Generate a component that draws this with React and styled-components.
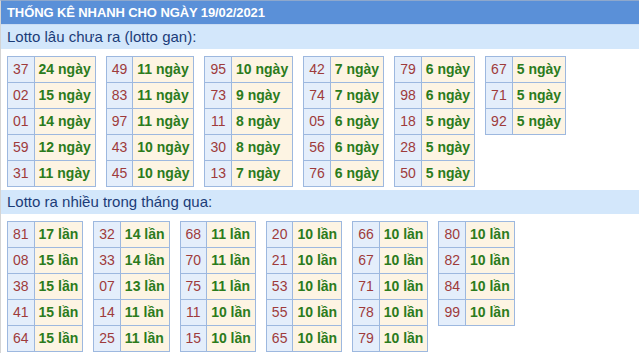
import React from 'react'
import styled, { createGlobalStyle } from 'styled-components'

const gan = [
  [['37', 24], ['02', 15], ['01', 14], ['59', 12], ['31', 11]],
  [['49', 11], ['83', 11], ['97', 11], ['43', 10], ['45', 10]],
  [['95', 10], ['73', 9], ['11', 8], ['30', 8], ['13', 7]],
  [['42', 7], ['74', 7], ['05', 6], ['56', 6], ['76', 6]],
  [['79', 6], ['98', 6], ['18', 5], ['28', 5], ['50', 5]],
  [['67', 5], ['71', 5], ['92', 5]],
]

const nhieu = [
  [['81', 17], ['08', 15], ['38', 15], ['41', 15], ['64', 15]],
  [['32', 14], ['33', 14], ['07', 13], ['14', 11], ['25', 11]],
  [['68', 11], ['70', 11], ['75', 11], ['11', 10], ['15', 10]],
  [['20', 10], ['21', 10], ['53', 10], ['55', 10], ['65', 10]],
  [['66', 10], ['67', 10], ['71', 10], ['78', 10], ['79', 10]],
  [['80', 10], ['82', 10], ['84', 10], ['99', 10]],
]

export default function App() {
  return (
    <>
      <GlobalStyle />
      <Page>
        <TopBar>THỐNG KÊ NHANH CHO NGÀY 19/02/2021</TopBar>
        <Section title="Lotto lâu chưa ra (lotto gan):" groups={gan} unit="ngày" />
        <Section title="Lotto ra nhiều trong tháng qua:" groups={nhieu} unit="lần" />
      </Page>
    </>
  )
}

function Section({ title, groups, unit }) {
  return (
    <SectionWrap>
      <SubBar>{title}</SubBar>
      <Tables>
        {groups.map((rows, i) => (
          <Table key={i}>
            <tbody>
              {rows.map(([num, val]) => (
                <tr key={num}>
                  <NumCell>{num}</NumCell>
                  <ValCell>{val} {unit}</ValCell>
                </tr>
              ))}
            </tbody>
          </Table>
        ))}
      </Tables>
    </SectionWrap>
  )
}

const GlobalStyle = createGlobalStyle`
  body {
    margin: 0;
    background: #fff;
    font-family: "Liberation Sans", Arial, sans-serif;
  }
`
const Page = styled.div`
  width: 639px;
  height: 353px;
  box-sizing: border-box;
  border-left: 1px solid #d4d4d4;
  border-top: 1px solid #8ea8cc;
  overflow: hidden;
`
const TopBar = styled.div`
  height: 23px;
  line-height: 23px;
  padding-left: 6px;
  background: #5a90d8;
  color: #fff;
  font-size: 13px;
  font-weight: bold;
  letter-spacing: -0.1px;
  border-bottom: 1px solid #c9dcf3;
`
const SectionWrap = styled.div`
  margin-bottom: 3px;
`
const SubBar = styled.div`
  height: 24px;
  line-height: 24px;
  padding-left: 6px;
  background: #d3e7fb;
  color: #1b3c78;
  font-size: 15px;
  margin-bottom: 7px;
`
const Tables = styled.div`
  display: flex;
  align-items: flex-start;
  gap: 10px;
  padding-left: 6px;
`
const Table = styled.table`
  border-collapse: collapse;
  font-size: 14px;
  line-height: 15px;
`
const NumCell = styled.td`
  border: 1px solid #9db8df;
  background: #e4eefb;
  color: #9e3b3b;
  padding: 5px 5px;
  text-align: center;
`
const ValCell = styled.td`
  border: 1px solid #9db8df;
  background: #fdf4e3;
  color: #2b7b1c;
  font-weight: bold;
  padding: 5px 4px;
  white-space: nowrap;
`
